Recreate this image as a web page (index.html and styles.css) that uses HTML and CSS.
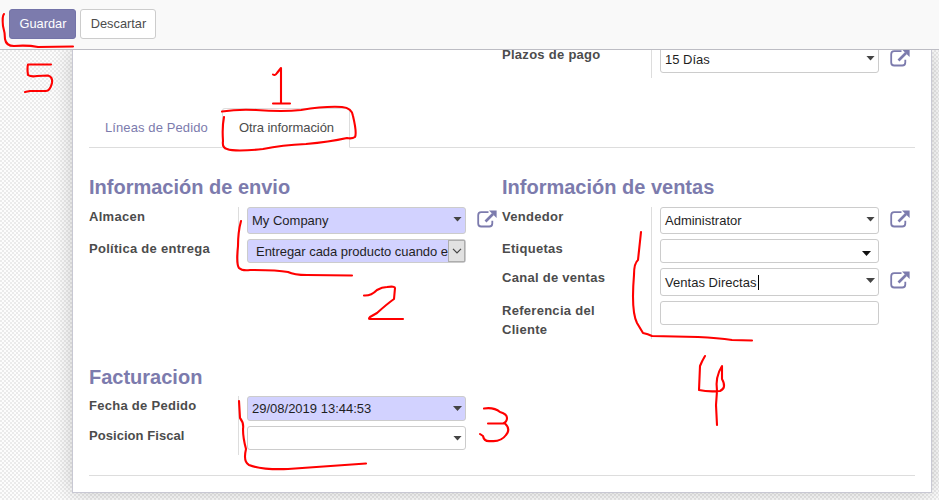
FILE: index.html
```html
<!DOCTYPE html>
<html lang="es">
<head>
<meta charset="utf-8">
<title>Pedido de venta</title>
<link rel="stylesheet" href="styles.css">
</head>
<body>
<svg width="0" height="0" class="defs"><symbol id="ext" viewBox="0 0 20 18"><path d="M11.500 2.200H4.200Q1.200 2.200 1.200 5.200V13.500Q1.200 16.500 4.200 16.500H12.300Q15.300 16.500 15.300 13.500V10.800" fill="none" stroke="currentColor" stroke-width="1.8"/><path d="M8.500 11.500L16 4" fill="none" stroke="currentColor" stroke-width="2.6"/><path d="M12 0.500H19.600V8Z" fill="currentColor"/></symbol></svg>
<header class="toolbar">
  <button class="btn primary">Guardar</button>
  <button class="btn">Descartar</button>
</header>
<main class="content">
  <section class="sheet">
    <div class="cols terms">
      <div></div>
      <div class="group">
        <div class="row plazos"><label>Plazos de pago</label><div class="cell"><div class="field h27"><span>15 Días</span><i class="caret"></i></div><svg class="ext"><use href="#ext"/></svg></div></div>
      </div>
    </div>
    <nav class="tabs"><a class="tab">Líneas de Pedido</a><a class="tab active">Otra información</a></nav>
    <div class="cols first">
      <div class="group">
        <h2>Información de envio</h2>
        <div class="row"><label>Almacen</label><div class="cell"><div class="field req h27"><span>My Company</span><i class="caret"></i></div><svg class="ext"><use href="#ext"/></svg></div></div>
        <div class="row"><label>Política de entrega</label><div class="cell"><div class="field req select"><span>Entregar cada producto cuando e</span><b class="drop"><svg width="10" height="6" viewBox="0 0 10 6"><path d="M1 .8L5 4.800L9 .8" fill="none" stroke="#444" stroke-width="1.2"/></svg></b></div></div></div>
      </div>
      <div class="group">
        <h2>Información de ventas</h2>
        <div class="row"><label>Vendedor</label><div class="cell"><div class="field h27"><span>Administrator</span><i class="caret"></i></div><svg class="ext"><use href="#ext"/></svg></div></div>
        <div class="row"><label>Etiquetas</label><div class="cell"><div class="field tags"><span></span><i class="caret"></i></div></div></div>
        <div class="row"><label>Canal de ventas</label><div class="cell"><div class="field h28"><span class="typing">Ventas Directas</span><i class="caret"></i></div><svg class="ext"><use href="#ext"/></svg></div></div>
        <div class="row tall"><label>Referencia del Cliente</label><div class="cell"><div class="field"></div></div></div>
      </div>
    </div>
    <div class="cols second">
      <div class="group">
        <h2>Facturacion</h2>
        <div class="row"><label>Fecha de Pedido</label><div class="cell"><div class="field req h25"><span>29/08/2019 13:44:53</span><i class="caret low"></i></div></div></div>
        <div class="row"><label class="tight">Posicion Fiscal</label><div class="cell"><div class="field"><span></span><i class="caret low"></i></div></div></div>
      </div>
    </div>
    <hr>
  </section>
</main>
<svg class="ink" width="939" height="500" viewBox="0 0 939 500">
  <path d="M4 14Q2 16 3 26Q5 33 5 39Q6 46 14 46Q28 45 38 47L73 46.500"/>
  <path d="M51 64.500H28Q27 68 28 75Q31 77 37 76L48 75.500Q53 77 52 83Q50 91 46 91H30L25 92"/>
  <path d="M273 74.500Q275 76 277 73L281 68V103M273 103.500H290"/>
  <path d="M222 111.500Q238 109 256 110Q283 112 301 110Q325 106 342 107Q352 108 353 116Q357 133 355 137Q352 139 347 138Q329 142 306 144Q282 145 263 149Q235 152 227 149Q222 148 223 141Q222 127 224 117"/>
  <path d="M241 221Q238 232 238 246Q236 264 239 268Q242 271 250 270Q277 270 288 272Q294 275 307 275L352 275.500"/>
  <path d="M364 295.500Q371 296 377 290Q382 287 387 287Q395 286 395 288L394 299Q387 304 377 313L370 317Q368 319 370 319H403"/>
  <path d="M239 401L240 418Q244 423 243 429Q243 438 246 449Q243 462 249 465Q262 470 288 469L366 463.500"/>
  <path d="M484 408.500Q494 407 500 412Q507 414 507 418Q507 422 503 423.500L488 423.500H505Q511 429 506 435Q501 442 491 441Q484 442 483 436L480 434"/>
  <path d="M641 232L638 260Q634 263 634 275Q631 311 637 323L643 333Q648 334 652 336L698 337Q718 338 732 340L752 340.500"/>
  <path d="M705 356Q702 361 700 366L699 390Q708 392 720 391Q727 388 722 379L722 366Q715 377 717 391L716 405L717 425"/>
</svg>
</body>
</html>
```

FILE: styles.css
```css
* { box-sizing: border-box; }
body { margin: 0; height: 500px; overflow: hidden; position: relative; font: 13px/19px "Liberation Sans", Arial, sans-serif; color: #4c4c4c; }
.defs { display: block; }
.toolbar { height: 50px; display: flex; gap: 4px; padding: 9px; background: #f9f9f9; border-bottom: 1px solid #bdbdc4; }
.btn { height: 30px; width: 76px; padding: 0 0 1px 1px; font: inherit; font-size: 12.800px; color: #4c4c4c; background: #fff; border: 1px solid #ccc; border-radius: 3px; }
.btn.primary { width: 67px; color: #fff; background: #7c7bad; border-color: #7373a8; }
.content { height: 450px; padding: 0 7px 7px 72px; overflow: hidden; background: repeating-conic-gradient(#ebebeb 0 25%, #fdfdfd 0 50%) 0 0 / 4px 4px; }
.sheet { height: 443px; padding: 0 16px; background: #fff; border: 1px solid #c8c8d3; border-top: 0; box-shadow: 0 0 20px rgba(0,0,0,.2); }
.cols { display: grid; grid-template-columns: 413px 413px; }
.terms { height: 58px; }
.tabs { height: 40px; display: flex; border-bottom: 1px solid #ddd; }
.tab { height: 40px; padding: 9px 15px; border: 1px solid transparent; color: #7c7bad; white-space: nowrap; }
.tab:first-child { width: 133px; letter-spacing: .1px; }
.tab.active { width: 128px; padding-left: 16px; letter-spacing: -.07px; color: #4c4c4c; background: #fff; border-color: #ddd #ddd #fff; border-radius: 3px 3px 0 0; }
.first { height: 214px; padding-top: 25px; }
.second { height: 113px; padding-top: 1px; }
h2 { height: 34px; margin: 0; padding-top: 2px; font-size: 20px; line-height: 24px; color: #7c7bad; }
.second h2 { height: 33px; }
.row { display: flex; }
.row label { width: 149px; padding-right: 20px; font-weight: bold; letter-spacing: .28px; white-space: nowrap; }
.row .tight { letter-spacing: .05px; }
.row.tall label { padding-right: 40px; white-space: normal; }
.cell { display: flex; gap: 11px; padding: 0 0 5px 8px; border-left: 1px solid #ddd; }
.field { width: 219px; height: 24px; display: flex; align-items: center; padding: 0 3px 0 4px; background: #fff; border: 1px solid #ccc; border-radius: 3px; color: #1f1f1f; }
.h25 { height: 25px; }
.h27 { height: 27px; }
.h28 { height: 28px; }
.req { background: #d2d2ff; }
.field span { flex: 1; white-space: nowrap; }
.caret { width: 9px; height: 5px; margin-bottom: 3px; background: #444; clip-path: polygon(0 0, 100% 0, 50% 100%); }
.low { margin-bottom: 0; }
.tags .caret { margin: 5px 4px 0 0; background: #111; }
.field .typing { flex: none; padding-right: 1px; border-right: 1px solid #000; line-height: 15px; letter-spacing: .03px; }
.typing + .caret { margin-left: auto; }
.select { padding: 0 0 0 8px; }
.select span { letter-spacing: -.03px; }
.drop { flex: none; width: 17px; height: 22px; display: flex; align-items: center; justify-content: center; background: #e1e1e1; border: 1px solid #adadad; }
.ext { flex: none; width: 20px; height: 18px; margin-top: 3px; color: #7c7bad; }
.plazos { margin-top: -4px; }
.plazos label { margin-top: -1px; }
hr { margin: 0; border: 0; border-top: 1px solid #ddd; }
.ink { position: absolute; inset: 0; fill: none; stroke: #f00; stroke-width: 2.1; stroke-linecap: round; stroke-linejoin: round; pointer-events: none; }
```
